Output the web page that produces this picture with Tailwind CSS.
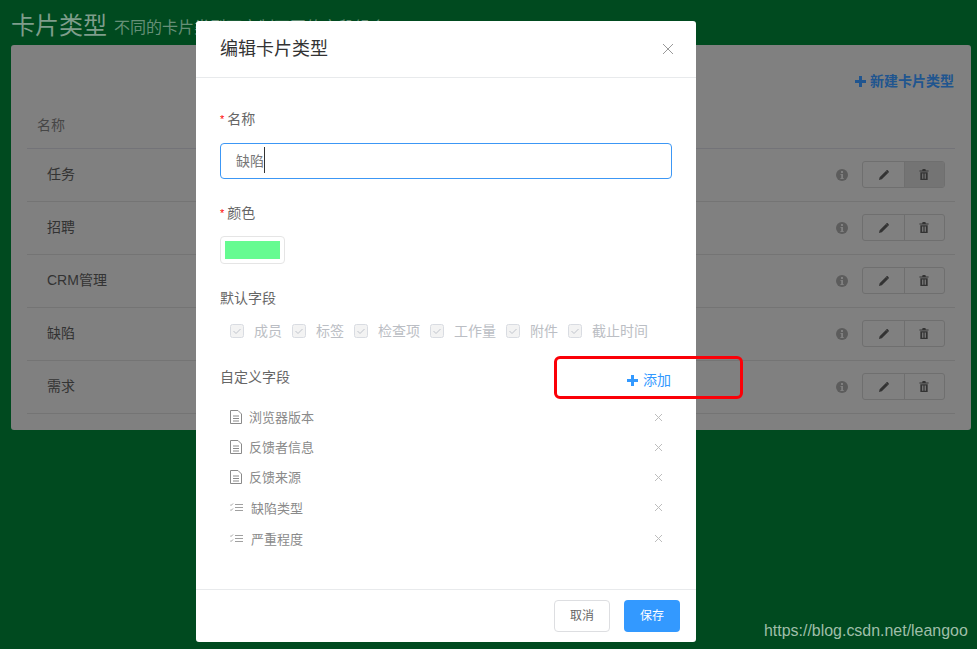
<!DOCTYPE html>
<html lang="zh-CN">
<head>
    <meta charset="utf-8">
    <title>卡片类型</title>
    <script src="https://cdn.jsdelivr.net/npm/@tailwindcss/browser@4"></script>
</head>
<body class="bg-[#004a1f] font-['Liberation_Sans','Noto_Sans_CJK_SC',sans-serif]">
<div class="relative w-[977px] h-[649px] overflow-hidden">

    <!-- Page behind the overlay -->
    <div class="px-[11px]">
        <div class="h-[45px] flex items-center pt-[6px] gap-[7px] whitespace-nowrap">
            <span class="text-[24px] text-[#7f9d8b]">卡片类型</span>
            <span class="text-[16px] text-[#668f77] mt-[4px]">不同的卡片类型可定制不同的字段组合</span>
        </div>
        <div class="bg-[#808080] w-[960px] h-[385px] rounded-[3px] px-[16px]">
            <div class="h-[58px] pt-[27px] flex justify-end pr-[1px]">
                <span class="text-[14px] font-bold text-[#20558f] flex items-center gap-[4px] h-[18px]">
                    <svg width="11" height="11" viewBox="0 0 11 11"><path d="M4 0h3v4h4v3H7v4H4V7H0V4h4z" fill="#20558f"/></svg>
                    新建卡片类型
                </span>
            </div>
            <div class="h-[46px] flex items-center pl-[10px] text-[14px] text-[#464646] border-b border-[#737378]">名称</div>
            <div id="rows">
                <div class="h-[53px] pb-[1px] flex items-center pl-[20px] pr-[10px] border-b border-[#747474] text-[14px] text-[#333]">
                    <span class="flex-1">任务</span>
                    <svg class="mr-[14px]" width="12" height="12" viewBox="0 0 12 12"><circle cx="6" cy="6" r="6" fill="#5c5c5c"/><path d="M5 2h2v2H5zM4.500 5H7v4h.7v1H4.400V9h.8V6h-.7z" fill="#808080"/></svg>
                    <div class="flex w-[83px] h-[27px] border border-[#6f6f6f] rounded-[3px] overflow-hidden">
                        <div class="w-[42px] flex items-center justify-center border-r border-[#6f6f6f]"><svg width="10" height="10" viewBox="0 0 11 11"><path d="M0 11l.7-3L7.600 1l2.400 2.400-6.900 6.900zM8.300.4c.4-.4 1-.4 1.300 0l1 1c.4.4.4 1 0 1.300l-.5.6-2.400-2.400z" fill="#333"/></svg></div>
                        <div class="flex-1 bg-[#747474] flex items-center justify-center pr-[1px]"><svg width="10" height="11" viewBox="0 0 10 12"><path fill-rule="evenodd" d="M3.500 0h3l.5 1.500h3v1.200H0V1.500h3zM1 3.500h8V12H1zM3 5v5.500h1.300V5zM5.700 5v5.500H7V5z" fill="#333"/></svg></div>
                    </div>
                </div>
                <div class="h-[53px] pb-[1px] flex items-center pl-[20px] pr-[10px] border-b border-[#747474] text-[14px] text-[#333]">
                    <span class="flex-1">招聘</span>
                    <svg class="mr-[14px]" width="12" height="12" viewBox="0 0 12 12"><circle cx="6" cy="6" r="6" fill="#5c5c5c"/><path d="M5 2h2v2H5zM4.500 5H7v4h.7v1H4.400V9h.8V6h-.7z" fill="#808080"/></svg>
                    <div class="flex w-[83px] h-[27px] border border-[#6f6f6f] rounded-[3px] overflow-hidden">
                        <div class="w-[42px] flex items-center justify-center border-r border-[#6f6f6f]"><svg width="10" height="10" viewBox="0 0 11 11"><path d="M0 11l.7-3L7.600 1l2.400 2.400-6.900 6.900zM8.300.4c.4-.4 1-.4 1.300 0l1 1c.4.4.4 1 0 1.300l-.5.6-2.400-2.400z" fill="#333"/></svg></div>
                        <div class="flex-1 flex items-center justify-center pr-[1px]"><svg width="10" height="11" viewBox="0 0 10 12"><path fill-rule="evenodd" d="M3.500 0h3l.5 1.500h3v1.200H0V1.500h3zM1 3.500h8V12H1zM3 5v5.500h1.300V5zM5.700 5v5.500H7V5z" fill="#333"/></svg></div>
                    </div>
                </div>
                <div class="h-[53px] pb-[1px] flex items-center pl-[20px] pr-[10px] border-b border-[#747474] text-[14px] text-[#333]">
                    <span class="flex-1">CRM管理</span>
                    <svg class="mr-[14px]" width="12" height="12" viewBox="0 0 12 12"><circle cx="6" cy="6" r="6" fill="#5c5c5c"/><path d="M5 2h2v2H5zM4.500 5H7v4h.7v1H4.400V9h.8V6h-.7z" fill="#808080"/></svg>
                    <div class="flex w-[83px] h-[27px] border border-[#6f6f6f] rounded-[3px] overflow-hidden">
                        <div class="w-[42px] flex items-center justify-center border-r border-[#6f6f6f]"><svg width="10" height="10" viewBox="0 0 11 11"><path d="M0 11l.7-3L7.600 1l2.400 2.400-6.900 6.900zM8.300.4c.4-.4 1-.4 1.300 0l1 1c.4.4.4 1 0 1.300l-.5.6-2.400-2.400z" fill="#333"/></svg></div>
                        <div class="flex-1 flex items-center justify-center pr-[1px]"><svg width="10" height="11" viewBox="0 0 10 12"><path fill-rule="evenodd" d="M3.500 0h3l.5 1.500h3v1.200H0V1.500h3zM1 3.500h8V12H1zM3 5v5.500h1.300V5zM5.700 5v5.500H7V5z" fill="#333"/></svg></div>
                    </div>
                </div>
                <div class="h-[53px] pb-[1px] flex items-center pl-[20px] pr-[10px] border-b border-[#747474] text-[14px] text-[#333]">
                    <span class="flex-1">缺陷</span>
                    <svg class="mr-[14px]" width="12" height="12" viewBox="0 0 12 12"><circle cx="6" cy="6" r="6" fill="#5c5c5c"/><path d="M5 2h2v2H5zM4.500 5H7v4h.7v1H4.400V9h.8V6h-.7z" fill="#808080"/></svg>
                    <div class="flex w-[83px] h-[27px] border border-[#6f6f6f] rounded-[3px] overflow-hidden">
                        <div class="w-[42px] flex items-center justify-center border-r border-[#6f6f6f]"><svg width="10" height="10" viewBox="0 0 11 11"><path d="M0 11l.7-3L7.600 1l2.400 2.400-6.900 6.900zM8.300.4c.4-.4 1-.4 1.300 0l1 1c.4.4.4 1 0 1.300l-.5.6-2.400-2.400z" fill="#333"/></svg></div>
                        <div class="flex-1 flex items-center justify-center pr-[1px]"><svg width="10" height="11" viewBox="0 0 10 12"><path fill-rule="evenodd" d="M3.500 0h3l.5 1.500h3v1.200H0V1.500h3zM1 3.500h8V12H1zM3 5v5.500h1.300V5zM5.700 5v5.500H7V5z" fill="#333"/></svg></div>
                    </div>
                </div>
                <div class="h-[53px] pb-[1px] flex items-center pl-[20px] pr-[10px] border-b border-[#747474] text-[14px] text-[#333]">
                    <span class="flex-1">需求</span>
                    <svg class="mr-[14px]" width="12" height="12" viewBox="0 0 12 12"><circle cx="6" cy="6" r="6" fill="#5c5c5c"/><path d="M5 2h2v2H5zM4.500 5H7v4h.7v1H4.400V9h.8V6h-.7z" fill="#808080"/></svg>
                    <div class="flex w-[83px] h-[27px] border border-[#6f6f6f] rounded-[3px] overflow-hidden">
                        <div class="w-[42px] flex items-center justify-center border-r border-[#6f6f6f]"><svg width="10" height="10" viewBox="0 0 11 11"><path d="M0 11l.7-3L7.600 1l2.400 2.400-6.900 6.900zM8.300.4c.4-.4 1-.4 1.300 0l1 1c.4.4.4 1 0 1.300l-.5.6-2.400-2.400z" fill="#333"/></svg></div>
                        <div class="flex-1 flex items-center justify-center pr-[1px]"><svg width="10" height="11" viewBox="0 0 10 12"><path fill-rule="evenodd" d="M3.500 0h3l.5 1.500h3v1.200H0V1.500h3zM1 3.500h8V12H1zM3 5v5.500h1.300V5zM5.700 5v5.500H7V5z" fill="#333"/></svg></div>
                    </div>
                </div>
            </div>
        </div>
    </div>

    <!-- Modal -->
    <div class="absolute left-[196px] top-[21px] w-[500px] h-[621px] bg-white rounded-[3px] flex flex-col">
        <div class="h-[57px] shrink-0 flex items-center justify-between pl-[24px] pr-[21px] border-b border-[#e8eaec]">
            <span class="text-[18px] text-[#333] leading-[56px]">编辑卡片类型</span>
            <svg width="14" height="14" viewBox="0 0 14 14"><path d="M2 2l10 10M12 2L2 12" stroke="#999" stroke-width="1" fill="none"/></svg>
        </div>
        <div class="flex-1 px-[24px] text-[14px] text-[#515a6e]">
            <div class="h-[20px] mt-[31px] flex items-center text-[#666]"><span class="text-[#f00] text-[11px] mr-[3px]">*</span>名称</div>
            <div class="mt-[14px] w-[452px] h-[36px] border border-[#3c97f5] rounded-[4px] flex items-center pl-[15px] text-[#777]">缺陷<span class="w-px h-[26px] bg-[#333] -mt-[2px]"></span></div>
            <div class="h-[20px] mt-[24px] flex items-center text-[#666]"><span class="text-[#f00] text-[11px] mr-[3px]">*</span>颜色</div>
            <div class="mt-[13px] w-[65px] h-[28px] border border-[#e5e5e5] rounded-[4px] p-[4px]"><div class="h-full bg-[#66fb91]"></div></div>
            <div class="h-[20px] mt-[24px] flex items-center text-[#666]">默认字段</div>
            <div class="mt-[13px] pl-[10px] h-[20px] flex items-center text-[#bbbec4] gap-[10px] whitespace-nowrap">
                <span class="flex items-center gap-[10px]"><svg width="14" height="14" viewBox="0 0 14 14"><rect x=".5" y=".5" width="13" height="13" rx="2" fill="#f3f3f3" stroke="#d9dce2"/><path d="M3.500 7l2.500 2.500 4.500-4.500" stroke="#c0c4cc" fill="none"/></svg>成员</span>
                <span class="flex items-center gap-[10px]"><svg width="14" height="14" viewBox="0 0 14 14"><rect x=".5" y=".5" width="13" height="13" rx="2" fill="#f3f3f3" stroke="#d9dce2"/><path d="M3.500 7l2.500 2.500 4.500-4.500" stroke="#c0c4cc" fill="none"/></svg>标签</span>
                <span class="flex items-center gap-[10px]"><svg width="14" height="14" viewBox="0 0 14 14"><rect x=".5" y=".5" width="13" height="13" rx="2" fill="#f3f3f3" stroke="#d9dce2"/><path d="M3.500 7l2.500 2.500 4.500-4.500" stroke="#c0c4cc" fill="none"/></svg>检查项</span>
                <span class="flex items-center gap-[10px]"><svg width="14" height="14" viewBox="0 0 14 14"><rect x=".5" y=".5" width="13" height="13" rx="2" fill="#f3f3f3" stroke="#d9dce2"/><path d="M3.500 7l2.500 2.500 4.500-4.500" stroke="#c0c4cc" fill="none"/></svg>工作量</span>
                <span class="flex items-center gap-[10px]"><svg width="14" height="14" viewBox="0 0 14 14"><rect x=".5" y=".5" width="13" height="13" rx="2" fill="#f3f3f3" stroke="#d9dce2"/><path d="M3.500 7l2.500 2.500 4.500-4.500" stroke="#c0c4cc" fill="none"/></svg>附件</span>
                <span class="flex items-center gap-[10px]"><svg width="14" height="14" viewBox="0 0 14 14"><rect x=".5" y=".5" width="13" height="13" rx="2" fill="#f3f3f3" stroke="#d9dce2"/><path d="M3.500 7l2.500 2.500 4.500-4.500" stroke="#c0c4cc" fill="none"/></svg>截止时间</span>
            </div>
            <div class="mt-[26px] h-[20px] flex items-center justify-between text-[#666]">
                <span>自定义字段</span>
                <span class="flex items-center gap-[5px] text-[#3399ff] mt-[6px] mr-[1px]"><svg width="11" height="11" viewBox="0 0 11 11"><path d="M4 0h3v4h4v3H7v4H4V7H0V4h4z" fill="#3399ff"/></svg>添加</span>
            </div>
            <div class="mt-[15px] pl-[10px] pr-[9px] text-[13px] text-[#8a8a8a]">
                <div class="h-[30px] flex items-center justify-between"><span class="flex items-center gap-[7px]"><svg width="12" height="14" viewBox="0 0 12 14" fill="none" stroke="#8a8a8a"><path d="M.5.5h7.500l3.500 3.500v9.500H.5zM3 6h6M3 8.500h6M3 11h6"/></svg><span class="pt-[2px]">浏览器版本</span></span><svg width="9" height="9" viewBox="0 0 9 9"><path d="M1 1l7 7M8 1L1 8" stroke="#bdbdbd"/></svg></div>
                <div class="h-[30px] flex items-center justify-between"><span class="flex items-center gap-[7px]"><svg width="12" height="14" viewBox="0 0 12 14" fill="none" stroke="#8a8a8a"><path d="M.5.5h7.500l3.500 3.500v9.500H.5zM3 6h6M3 8.500h6M3 11h6"/></svg><span class="pt-[2px]">反馈者信息</span></span><svg width="9" height="9" viewBox="0 0 9 9"><path d="M1 1l7 7M8 1L1 8" stroke="#bdbdbd"/></svg></div>
                <div class="h-[30px] flex items-center justify-between"><span class="flex items-center gap-[7px]"><svg width="12" height="14" viewBox="0 0 12 14" fill="none" stroke="#8a8a8a"><path d="M.5.5h7.500l3.500 3.500v9.500H.5zM3 6h6M3 8.500h6M3 11h6"/></svg><span class="pt-[2px]">反馈来源</span></span><svg width="9" height="9" viewBox="0 0 9 9"><path d="M1 1l7 7M8 1L1 8" stroke="#bdbdbd"/></svg></div>
                <div class="h-[31px] flex items-center justify-between"><span class="flex items-center gap-[8px]"><svg width="13" height="9" viewBox="0 0 13 9" fill="none" stroke="#a0a0a0"><path d="M0 1.500l1 1 2-2M0 6.500l1 1 2-2M5 1.500h8M5 4.500h8M5 7.500h8"/></svg><span class="pt-[2px]">缺陷类型</span></span><svg width="9" height="9" viewBox="0 0 9 9"><path d="M1 1l7 7M8 1L1 8" stroke="#bdbdbd"/></svg></div>
                <div class="h-[31px] flex items-center justify-between"><span class="flex items-center gap-[8px]"><svg width="13" height="9" viewBox="0 0 13 9" fill="none" stroke="#a0a0a0"><path d="M0 1.500l1 1 2-2M0 6.500l1 1 2-2M5 1.500h8M5 4.500h8M5 7.500h8"/></svg><span class="pt-[2px]">严重程度</span></span><svg width="9" height="9" viewBox="0 0 9 9"><path d="M1 1l7 7M8 1L1 8" stroke="#bdbdbd"/></svg></div>
            </div>
        </div>
        <div class="h-[53px] shrink-0 border-t border-[#e8eaec] flex justify-end gap-[14px] pt-[10px] pr-[16px] text-[12px]">
            <button class="w-[56px] h-[32px] border border-[#dddee1] rounded-[4px] text-[#666] bg-white">取消</button>
            <button class="w-[56px] h-[32px] rounded-[4px] text-white bg-[#3399ff]">保存</button>
        </div>
    </div>

    <!-- Annotation drawn over the screenshot -->
    <div class="absolute left-[554px] top-[356px] w-[189px] h-[43px] border-[3px] border-[#fb0007] rounded-[6px]"></div>
    <span class="absolute left-[764px] top-[622px] text-[15.95px] leading-[18px] text-[#9fbfa9] whitespace-nowrap">https://blog.csdn.net/leangoo</span>
</div>
</body>
</html>
